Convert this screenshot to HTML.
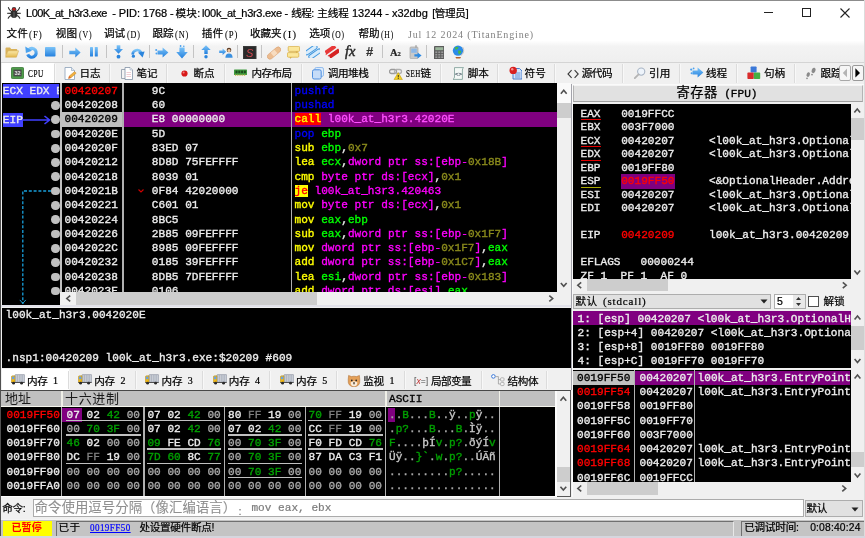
<!DOCTYPE html>
<html lang="zh"><head><meta charset="utf-8"><title>x32dbg</title>
<style>
*{box-sizing:border-box}
html,body{margin:0;padding:0}
body{width:865px;height:538px;overflow:hidden;will-change:transform;background:#f0f0f0;position:relative;font-family:"Liberation Sans","Noto Sans CJK SC",sans-serif;font-size:12px;color:#000}
.abs,.abs *{position:absolute}
div,span,svg{position:absolute}
.m{font-family:"Liberation Mono","DejaVu Sans Mono",monospace;font-weight:normal;-webkit-text-stroke-width:0.35px;font-size:11.12px;white-space:pre;line-height:14.29px;height:14.29px}
.m span,.t span,.inl span{position:static}
.t{white-space:pre;-webkit-text-stroke-width:0.22px}
.blk{background:#000}
.w{color:#ececec}.r{color:#f00}.g{color:#0f0}.b{color:#00f}.y{color:#ff0}.p{color:#f0f}.o{color:#8a8a1c}
.dg{color:#00a000}.gr{color:#a8a8a8}.gd{color:#808080}
.sep{background:#c8c8c8;width:1px}
.tab{top:0;height:21px;white-space:pre;font-size:12px;line-height:21px}
.vs{background:#f0f0f0}
.th{background:#cdcdcd}
</style></head><body>

<div style="left:0;top:0;width:865px;height:41px;background:#fff"></div>
<div style="left:0;top:0;width:865px;height:0.9px;background:#8c8c8c"></div>
<svg style="left:7px;top:5.8px" width="14" height="13" viewBox="0 0 14 13">
<g stroke="#2a2a2a" stroke-width="1.1" fill="none" stroke-linecap="round"><path d="M1.4 1.6 Q2 4 4.6 5.4 M12.6 1.6 Q12 4 9.4 5.4 M0.6 7.2 L4 7.4 M13.4 7.2 L10 7.4 M1.2 12.2 Q2 10 4.6 9.2 M12.8 12.2 Q12 10 9.4 9.2"/></g>
<ellipse cx="7" cy="8" rx="3.4" ry="4" fill="#2e2e2e"/><ellipse cx="7" cy="3.2" rx="2.3" ry="2.2" fill="#3a3a3a"/><ellipse cx="7" cy="3.2" rx="1.5" ry="1.3" fill="#c81818"/><path d="M7 6 V12" stroke="#888" stroke-width="0.6"/></svg>
<div class="t" style="left:26.1px;top:5px;font-size:11px;line-height:17px;color:#000;letter-spacing:-0.581px;">L00K_at_h3r3.exe</div>
<div class="t" style="left:112.3px;top:5px;font-size:11px;line-height:17px;color:#000;letter-spacing:-0.088px;">- PID: 1768 -</div>
<div class="t" style="left:175.4px;top:5px;font-size:10.6px;line-height:17px;color:#000;letter-spacing:0.280px;">模块:</div>
<div class="t" style="left:202.1px;top:5px;font-size:11px;line-height:17px;color:#000;letter-spacing:-0.296px;">l00k_at_h3r3.exe -</div>
<div class="t" style="left:291.2px;top:5px;font-size:10.6px;line-height:17px;color:#000;letter-spacing:-0.570px;">线程:</div>
<div class="t" style="left:317.2px;top:5px;font-size:10.6px;line-height:17px;color:#000;letter-spacing:-0.091px;">主线程</div>
<div class="t" style="left:352px;top:5px;font-size:11px;line-height:17px;color:#000;letter-spacing:-0.050px;">13244 - x32dbg</div>
<div class="t" style="left:432.2px;top:5px;font-size:10.6px;line-height:17px;color:#000;letter-spacing:-0.318px;">[管理员]</div>
<div style="left:764px;top:12px;width:9px;height:1px;background:#222"></div>
<div style="left:802px;top:8px;width:9px;height:9px;border:1px solid #222"></div>
<svg style="left:840px;top:8px" width="10" height="10" viewBox="0 0 10 10"><path d="M0.5 0.5 L9.5 9.5 M9.5 0.5 L0.5 9.5" stroke="#222" stroke-width="1.1"/></svg>
<div class="t" style="left:6.6000000000000005px;top:25px;font-size:10.6px;line-height:17px;letter-spacing:0.012px;">文件</div>
<div class="t" style="left:29.3px;top:25.5px;font-family:'Liberation Serif','Noto Sans CJK SC',serif;font-size:9.6px;line-height:17px;-webkit-text-stroke-width:0.1px;letter-spacing:1px;transform:scaleX(0.9247);transform-origin:0 0;">(F)</div>
<div class="t" style="left:55.8px;top:25px;font-size:10.6px;line-height:17px;letter-spacing:0.013px;">视图</div>
<div class="t" style="left:78.5px;top:25.5px;font-family:'Liberation Serif','Noto Sans CJK SC',serif;font-size:9.6px;line-height:17px;-webkit-text-stroke-width:0.1px;letter-spacing:1px;transform:scaleX(0.8155);transform-origin:0 0;">(V)</div>
<div class="t" style="left:104.0px;top:25px;font-size:10.6px;line-height:17px;letter-spacing:0.012px;">调试</div>
<div class="t" style="left:126.69999999999999px;top:25.5px;font-family:'Liberation Serif','Noto Sans CJK SC',serif;font-size:9.6px;line-height:17px;-webkit-text-stroke-width:0.1px;letter-spacing:1px;transform:scaleX(0.8416);transform-origin:0 0;">(D)</div>
<div class="t" style="left:152.4px;top:25px;font-size:10.6px;line-height:17px;letter-spacing:0.012px;">跟踪</div>
<div class="t" style="left:175.1px;top:25.5px;font-family:'Liberation Serif','Noto Sans CJK SC',serif;font-size:9.6px;line-height:17px;-webkit-text-stroke-width:0.1px;letter-spacing:1px;transform:scaleX(0.8677);transform-origin:0 0;">(N)</div>
<div class="t" style="left:201.8px;top:25px;font-size:10.6px;line-height:17px;letter-spacing:0.012px;">插件</div>
<div class="t" style="left:224.5px;top:25.5px;font-family:'Liberation Serif','Noto Sans CJK SC',serif;font-size:9.6px;line-height:17px;-webkit-text-stroke-width:0.1px;letter-spacing:1px;transform:scaleX(0.9101);transform-origin:0 0;">(P)</div>
<div class="t" style="left:250.0px;top:25px;font-size:10.6px;line-height:17px;letter-spacing:-0.141px;">收藏夹</div>
<div class="t" style="left:283.0px;top:25.5px;font-family:'Liberation Serif','Noto Sans CJK SC',serif;font-size:9.6px;line-height:17px;-webkit-text-stroke-width:0.1px;letter-spacing:1px;transform:scaleX(1.1213);transform-origin:0 0;">(I)</div>
<div class="t" style="left:309.2px;top:25px;font-size:10.6px;line-height:17px;letter-spacing:0.013px;">选项</div>
<div class="t" style="left:331.90000000000003px;top:25.5px;font-family:'Liberation Serif','Noto Sans CJK SC',serif;font-size:9.6px;line-height:17px;-webkit-text-stroke-width:0.1px;letter-spacing:1px;transform:scaleX(0.7894);transform-origin:0 0;">(O)</div>
<div class="t" style="left:358.4px;top:25px;font-size:10.6px;line-height:17px;letter-spacing:0.013px;">帮助</div>
<div class="t" style="left:381.1px;top:25.5px;font-family:'Liberation Serif','Noto Sans CJK SC',serif;font-size:9.6px;line-height:17px;-webkit-text-stroke-width:0.1px;letter-spacing:1px;transform:scaleX(0.7959);transform-origin:0 0;">(H)</div>
<div class="t" style="left:407.9px;top:25.5px;font-family:'Liberation Serif','Noto Sans CJK SC',serif;font-size:9.6px;line-height:17px;color:#808080;-webkit-text-stroke-width:0;letter-spacing:0.8px;transform:scaleX(1.0438);transform-origin:0 0;">Jul 12 2024 (TitanEngine)</div>
<div style="left:0;top:41px;width:865px;height:21px;background:linear-gradient(#fefefe 0,#f3f3f3 25%,#efefef 100%)"></div>
<div style="left:0;top:62px;width:865px;height:1px;background:#d4d4d4"></div>
<svg width="0" height="0" style="left:0;top:0"><defs><linearGradient id="gb" x1="0" y1="0" x2="0" y2="1"><stop offset="0" stop-color="#7cc4f8"/><stop offset="1" stop-color="#2480de"/></linearGradient><linearGradient id="gy" x1="0" y1="0" x2="0" y2="1"><stop offset="0" stop-color="#fbe9a8"/><stop offset="1" stop-color="#e3b84e"/></linearGradient></defs></svg>
<div style="left:61.9px;top:45px;width:1px;height:13px;background:#c4c4c4"></div>
<div style="left:105.5px;top:45px;width:1px;height:13px;background:#c4c4c4"></div>
<div style="left:149.0px;top:45px;width:1px;height:13px;background:#c4c4c4"></div>
<div style="left:192.7px;top:45px;width:1px;height:13px;background:#c4c4c4"></div>
<div style="left:237.1px;top:45px;width:1px;height:13px;background:#c4c4c4"></div>
<div style="left:260.9px;top:45px;width:1px;height:13px;background:#c4c4c4"></div>
<div style="left:381.9px;top:45px;width:1px;height:13px;background:#c4c4c4"></div>
<div style="left:425.5px;top:45px;width:1px;height:13px;background:#c4c4c4"></div>
<svg style="left:5px;top:46px" width="14" height="12" viewBox="0 0 14 12"><path d="M0.5 2.5 Q0.5 1.5 1.5 1.5 H5 L6.2 3 H11.5 Q12.3 3 12.3 4 V5 H3.2 L0.5 10.5 Z" fill="#d9b25a"/><path d="M3 4.8 H13.6 L11.4 11.2 H0.6 Z" fill="url(#gy)" stroke="#d0a444" stroke-width="0.5"/></svg>
<svg style="left:24.5px;top:45.5px" width="14" height="14" viewBox="0 0 14 14"><path d="M3.6 3.8 A4.4 4.4 0 1 1 2.7 8.4" fill="none" stroke="url(#gb)" stroke-width="3.2"/><path d="M0.3 0.6 L0.9 7 L7 4.8 Z" fill="#4aa2ee"/></svg>
<svg style="left:45px;top:47px" width="10.5" height="9.5" viewBox="0 0 10.5 9.5"><rect x="0" y="0" width="10.5" height="9.5" rx="0.8" fill="url(#gb)"/></svg>
<svg style="left:69px;top:46.5px" width="12" height="11" viewBox="0 0 12 11"><path d="M0.3 3.7 H6.3 V0.6 L11.6 5.5 L6.3 10.4 V7.3 H0.3 Z" fill="url(#gb)"/></svg>
<svg style="left:89.8px;top:47px" width="8" height="10" viewBox="0 0 8 10"><rect x="0" y="0" width="3" height="9.5" rx="0.6" fill="url(#gb)"/><rect x="4.8" y="0" width="3" height="9.5" rx="0.6" fill="url(#gb)"/></svg>
<svg style="left:113.5px;top:45px" width="9" height="14" viewBox="0 0 9 14"><path d="M2.7 0.3 H6.3 V4 H9 L4.5 8.8 L0 4 H2.7 Z" fill="url(#gb)"/><circle cx="4.5" cy="11.7" r="1.9" fill="#2a84dc"/></svg>
<svg style="left:131px;top:46.5px" width="14" height="11" viewBox="0 0 14 11"><path d="M1.6 7.5 A4.6 4.6 0 0 1 10.2 5.4" fill="none" stroke="url(#gb)" stroke-width="2.6"/><path d="M7 5.6 L13.6 4.6 L11.6 10.6 Z" fill="#2a84dc"/><circle cx="2.4" cy="9.2" r="1.6" fill="#2a84dc"/></svg>
<svg style="left:155px;top:46.5px" width="14" height="11" viewBox="0 0 14 11"><path d="M2.5 3.4 H7.6 V0.4 L13.4 5.5 L7.6 10.6 V7.6 H2.5 Z" fill="url(#gb)"/><circle cx="1.2" cy="3" r="1" fill="#4aa0ee"/><circle cx="1.4" cy="6.5" r="0.9" fill="#4aa0ee"/></svg>
<svg style="left:175.5px;top:45px" width="12" height="14" viewBox="0 0 12 14"><path d="M3.4 2.4 H8.6 V7 H11.8 L6 13.4 L0.2 7 H3.4 Z" fill="url(#gb)"/><circle cx="4.6" cy="1" r="0.9" fill="#4aa0ee"/><circle cx="7.8" cy="1.2" r="0.8" fill="#4aa0ee"/></svg>
<svg style="left:200.5px;top:45px" width="10" height="14" viewBox="0 0 10 14"><path d="M3.3 9 H6.7 V5 H9.7 L5 0.3 L0.3 5 H3.3 Z" fill="url(#gb)"/><circle cx="5" cy="11.8" r="1.7" fill="#2a84dc"/></svg>
<svg style="left:219px;top:46.5px" width="14" height="11" viewBox="0 0 14 11"><path d="M0.2 3.6 H3.6 V1.6 L7.2 4.8 L3.6 8 V6 H0.2 Z" fill="url(#gb)"/><circle cx="10" cy="3" r="2.3" fill="#5a3a24"/><circle cx="10" cy="3.6" r="1.5" fill="#f0c8a0"/><path d="M6.4 10.8 Q6.4 6.4 10 6.4 Q13.6 6.4 13.6 10.8 Z" fill="#3a90e0"/></svg>
<svg style="left:243px;top:45.5px" width="13.5" height="13.5" viewBox="0 0 13.5 13.5"><rect x="0" y="0" width="13.5" height="13.5" fill="#3a3a3a"/><rect x="1" y="1" width="11.5" height="11.5" fill="#2a2a2a"/><text x="6.75" y="11" font-family="Liberation Sans,sans-serif" font-style="italic" font-size="11" text-anchor="middle" fill="#d04850">S</text></svg>
<svg style="left:267px;top:45.5px" width="14" height="14" viewBox="0 0 14 14"><g transform="rotate(-40 7 7)"><rect x="-1" y="4.4" width="16" height="5.4" rx="2.7" fill="#ecbc90" stroke="#d49a68" stroke-width="0.5"/><rect x="4.6" y="4.7" width="4.8" height="4.8" fill="#f7dcc0"/></g></svg>
<svg style="left:287px;top:46px" width="13" height="13" viewBox="0 0 13 13"><rect x="1.2" y="0.4" width="11.4" height="5" rx="1" fill="#fbe79a" stroke="#d6a93a" stroke-width="0.7"/><rect x="0.4" y="6.6" width="11.4" height="4.6" rx="1" fill="#fbe79a" stroke="#d6a93a" stroke-width="0.7"/><path d="M8.5 5.4 L10 7 L10.8 5.4 Z M2.5 11.2 L3.4 12.8 L4.8 11.2 Z" fill="#d6a93a"/></svg>
<svg style="left:306px;top:46px" width="14" height="12" viewBox="0 0 14 12"><g transform="rotate(-35 7 6)"><rect x="-0.5" y="1" width="14" height="4.2" rx="2.1" fill="#d8ecfb" stroke="#3f97e0" stroke-width="1"/><rect x="0.5" y="6.6" width="14" height="4.2" rx="2.1" fill="#d8ecfb" stroke="#3f97e0" stroke-width="1"/></g></svg>
<svg style="left:325px;top:46px" width="14" height="12" viewBox="0 0 14 12"><g transform="rotate(-35 7 6)"><path d="M0 1 H13 V5 H0 L1.6 3 Z" fill="#e83838"/><path d="M1 6.6 H14 V10.6 H1 L2.6 8.6 Z" fill="#d62222"/></g></svg>
<div class="t" style="left:345px;top:42.5px;font-family:'Liberation Serif','Noto Sans CJK SC',serif;font-style:italic;font-size:14.5px;line-height:17px;color:#2a2a2a;-webkit-text-stroke-width:0.45px">fx</div>
<div class="t" style="left:366px;top:44px;font-family:'Liberation Sans','Noto Sans CJK SC',sans-serif;font-style:italic;font-weight:bold;font-size:12.5px;line-height:16px;color:#333">#</div>
<div class="t" style="left:390px;top:45px;font-family:'Liberation Serif','Noto Sans CJK SC',serif;font-weight:bold;font-size:10.5px;line-height:16px;color:#222">A<span style="font-size:6.5px">2</span></div>
<svg style="left:409px;top:45px" width="13" height="14" viewBox="0 0 13 14"><rect x="1" y="2" width="8" height="11.6" rx="1" fill="#c9c9c9" stroke="#9a9a9a" stroke-width="0.6"/><rect x="2.2" y="3.6" width="5.6" height="4.2" fill="#8db7e6"/><rect x="6.4" y="0.2" width="1.2" height="2.4" fill="#9a9a9a"/><path d="M5.4 9.2 H8.6 V7.4 L12.6 10.4 L8.6 13.4 V11.6 H5.4 Z" fill="#2e8ae2"/></svg>
<svg style="left:433.5px;top:45.5px" width="10.5" height="13.5" viewBox="0 0 10.5 13.5"><rect x="0" y="0" width="10.5" height="13.5" rx="0.8" fill="#5c5c5c"/><rect x="1.3" y="1.2" width="7.9" height="3" fill="#9bb59b"/><g fill="#9a9a9a"><rect x="1.3" y="5.4" width="2" height="1.6"/><rect x="4.25" y="5.4" width="2" height="1.6"/><rect x="7.2" y="5.4" width="2" height="1.6"/><rect x="1.3" y="7.9" width="2" height="1.6"/><rect x="4.25" y="7.9" width="2" height="1.6"/><rect x="7.2" y="7.9" width="2" height="1.6"/><rect x="1.3" y="10.4" width="2" height="1.6"/><rect x="4.25" y="10.4" width="2" height="1.6"/><rect x="7.2" y="10.4" width="2" height="1.6"/></g></svg>
<svg style="left:451.5px;top:45px" width="13" height="14" viewBox="0 0 13 14"><circle cx="6" cy="5.6" r="5.2" fill="#2b8ae8"/><path d="M3 2.4 Q5 1 6.6 2.6 Q6 4.6 4 4.8 Q2.4 4.4 3 2.4 Z M6.2 5.6 Q8.6 5 9.4 6.8 Q8.6 9.2 7 9.4 Q5.6 7.6 6.2 5.6 Z" fill="#46b848"/><path d="M10.6 2 A6 6 0 0 1 8.8 10.6" fill="none" stroke="#b8b8b8" stroke-width="0.9"/><path d="M3.4 12 H9 L8.2 13.6 H4.2 Z" fill="#b4602c"/></svg>
<div style="left:0;top:63px;width:865px;height:21px;background:#f0f0f0"></div>
<div style="left:2px;top:63px;width:52px;height:20.5px;background:#fff"></div>
<div style="left:53.7px;top:64px;width:1px;height:18.5px;background:#dcdcdc"></div>
<div style="left:54.7px;top:64px;width:1px;height:18.5px;background:#f8f8f8"></div>
<div style="left:108.9px;top:64px;width:1px;height:18.5px;background:#dcdcdc"></div>
<div style="left:109.9px;top:64px;width:1px;height:18.5px;background:#f8f8f8"></div>
<div style="left:166.2px;top:64px;width:1px;height:18.5px;background:#dcdcdc"></div>
<div style="left:167.2px;top:64px;width:1px;height:18.5px;background:#f8f8f8"></div>
<div style="left:223.5px;top:64px;width:1px;height:18.5px;background:#dcdcdc"></div>
<div style="left:224.5px;top:64px;width:1px;height:18.5px;background:#f8f8f8"></div>
<div style="left:300.5px;top:64px;width:1px;height:18.5px;background:#dcdcdc"></div>
<div style="left:301.5px;top:64px;width:1px;height:18.5px;background:#f8f8f8"></div>
<div style="left:377.9px;top:64px;width:1px;height:18.5px;background:#dcdcdc"></div>
<div style="left:378.9px;top:64px;width:1px;height:18.5px;background:#f8f8f8"></div>
<div style="left:440.4px;top:64px;width:1px;height:18.5px;background:#dcdcdc"></div>
<div style="left:441.4px;top:64px;width:1px;height:18.5px;background:#f8f8f8"></div>
<div style="left:497.1px;top:64px;width:1px;height:18.5px;background:#dcdcdc"></div>
<div style="left:498.1px;top:64px;width:1px;height:18.5px;background:#f8f8f8"></div>
<div style="left:554.4px;top:64px;width:1px;height:18.5px;background:#dcdcdc"></div>
<div style="left:555.4px;top:64px;width:1px;height:18.5px;background:#f8f8f8"></div>
<div style="left:621.8px;top:64px;width:1px;height:18.5px;background:#dcdcdc"></div>
<div style="left:622.8px;top:64px;width:1px;height:18.5px;background:#f8f8f8"></div>
<div style="left:679.0px;top:64px;width:1px;height:18.5px;background:#dcdcdc"></div>
<div style="left:680.0px;top:64px;width:1px;height:18.5px;background:#f8f8f8"></div>
<div style="left:735.5px;top:64px;width:1px;height:18.5px;background:#dcdcdc"></div>
<div style="left:736.5px;top:64px;width:1px;height:18.5px;background:#f8f8f8"></div>
<div style="left:794.3px;top:64px;width:1px;height:18.5px;background:#dcdcdc"></div>
<div style="left:795.3px;top:64px;width:1px;height:18.5px;background:#f8f8f8"></div>
<svg style="left:10.7px;top:66.8px" width="13" height="12" viewBox="0 0 13 12"><rect x="0.4" y="0.4" width="12.2" height="11.2" rx="1.2" fill="#4e9e4a" stroke="#2f6e2c" stroke-width="0.8"/><rect x="2.4" y="2.6" width="8.2" height="6.8" fill="#4a4a4a"/><text x="6.5" y="8.3" font-size="5.6" font-family="Liberation Sans,sans-serif" font-weight="bold" text-anchor="middle" fill="#e8e8e8">32</text></svg>
<div class="t" style="left:27.5px;top:63px;height:20.5px;line-height:21.5px;font-size:10.5px;font-family:'Liberation Serif','Noto Sans CJK SC',serif;letter-spacing:0.8px;transform:scaleX(0.6900);transform-origin:0 0;">CPU</div>
<svg style="left:64px;top:66.5px" width="12.5" height="13" viewBox="0 0 12.5 13"><path d="M1 0.5 H7.5 L10.5 3.5 V12.5 H1 Z" fill="#fff" stroke="#8aa0b8" stroke-width="0.8"/><path d="M7.5 0.5 V3.5 H10.5" fill="#dfe8f2" stroke="#8aa0b8" stroke-width="0.6"/><path d="M4.5 11.5 L5.2 9 L10.6 4.6 L12.2 6.2 L7 10.8 Z" fill="#f0b040" stroke="#b87818" stroke-width="0.4"/><path d="M4.5 11.5 L5.2 9 L7 10.8 Z" fill="#e06030"/></svg>
<div class="t" style="left:79.4px;top:63px;height:20.5px;line-height:21.5px;font-size:10.6px;;letter-spacing:0.012px;">日志</div>
<svg style="left:121px;top:66.5px" width="12" height="13" viewBox="0 0 12 13"><path d="M0.5 2.5 H6 V11.5 H0.5 Z" fill="#f4f4f4" stroke="#8894a4" stroke-width="0.8"/><path d="M4 0.5 H9 L11.5 3 V12.5 H4 Z" fill="#fff" stroke="#8090a4" stroke-width="0.8"/><path d="M9 0.5 V3 H11.5" fill="#e4eaf2" stroke="#9aa6b6" stroke-width="0.5"/><path d="M5.5 5.5 H10 M5.5 7.5 H10 M5.5 9.5 H10" stroke="#e8b8c0" stroke-width="0.7"/></svg>
<div class="t" style="left:136.4px;top:63px;height:20.5px;line-height:21.5px;font-size:10.6px;;letter-spacing:0.012px;">笔记</div>
<svg style="left:180.5px;top:69.5px" width="7" height="7" viewBox="0 0 7 7"><circle cx="3.5" cy="3.5" r="3.1" fill="#d81818"/><circle cx="2.6" cy="2.5" r="1" fill="#f08080"/></svg>
<div class="t" style="left:193.4px;top:63px;height:20.5px;line-height:21.5px;font-size:10.6px;;letter-spacing:0.012px;">断点</div>
<svg style="left:234px;top:68.5px" width="13" height="7.5" viewBox="0 0 13 7.5"><rect x="0" y="0.5" width="13" height="5.6" rx="0.6" fill="#3f9a3f"/><g fill="#1c4a1c"><rect x="1.5" y="1.6" width="2" height="2.6"/><rect x="4.3" y="1.6" width="2" height="2.6"/><rect x="7.1" y="1.6" width="2" height="2.6"/><rect x="9.9" y="1.6" width="2" height="2.6"/></g><path d="M1 6.2 H12" stroke="#c8b040" stroke-width="1.2" stroke-dasharray="1 0.8"/></svg>
<div class="t" style="left:251.4px;top:63px;height:20.5px;line-height:21.5px;font-size:10.6px;;letter-spacing:-0.592px;">内存布局</div>
<svg style="left:311.5px;top:67px" width="12" height="12.5" viewBox="0 0 12 12.5"><rect x="2.8" y="0.5" width="8.7" height="9" rx="1.6" fill="#dcebfb" stroke="#7fb0ea" stroke-width="0.8"/><rect x="0.5" y="2.8" width="8.7" height="9.2" rx="1.6" fill="#c6dcf8" stroke="#4e8ede" stroke-width="1"/></svg>
<div class="t" style="left:327.7px;top:63px;height:20.5px;line-height:21.5px;font-size:10.6px;;letter-spacing:-0.392px;">调用堆栈</div>
<svg style="left:389.4px;top:67.5px" width="14" height="12" viewBox="0 0 14 12"><rect x="0.5" y="1.5" width="7" height="4" rx="2" fill="none" stroke="#9a9a9a" stroke-width="1.3"/><rect x="5.5" y="1.5" width="7" height="4" rx="2" fill="none" stroke="#b0b0b0" stroke-width="1.3"/><path d="M9.2 4.6 L13.4 11.6 H5 Z" fill="#f4d020" stroke="#b89400" stroke-width="0.5"/><rect x="8.8" y="7" width="0.9" height="2.4" fill="#222"/><rect x="8.8" y="10" width="0.9" height="0.9" fill="#222"/></svg>
<div class="t" style="left:406px;top:63px;height:20.5px;line-height:21.5px;font-size:10.5px;font-family:'Liberation Serif','Noto Sans CJK SC',serif;letter-spacing:0.8px;transform:scaleX(0.6667);transform-origin:0 0;">SEH</div>
<div class="t" style="left:420.4px;top:63px;height:20.5px;line-height:21.5px;font-size:10.6px;;letter-spacing:0.000px;">链</div>
<svg style="left:451.5px;top:66.5px" width="12.5" height="13" viewBox="0 0 12.5 13"><path d="M2.5 0.6 H11.6 Q10.4 1.6 10.4 3 V12.4 H1 Q2.5 11.4 2.5 10 Z" fill="#f4f8f6" stroke="#7a9a94" stroke-width="0.8"/><text x="6.4" y="8.8" font-size="6" font-weight="bold" font-family="Liberation Sans,sans-serif" text-anchor="middle" fill="#3a4a5a">&lt;&gt;</text></svg>
<div class="t" style="left:467.7px;top:63px;height:20.5px;line-height:21.5px;font-size:10.6px;;letter-spacing:0.013px;">脚本</div>
<svg style="left:508.5px;top:66px" width="13.5" height="13.5" viewBox="0 0 13.5 13.5"><path d="M4 2.5 H10.5 L13 5 V13 H4 Z" fill="#d4e4fa" stroke="#3a6fc4" stroke-width="0.9"/><path d="M6 7 H11.5 M6 9 H11.5 M6 11 H11.5" stroke="#4a80d0" stroke-width="0.8"/><circle cx="4.2" cy="4.4" r="3.7" fill="#d82020"/><circle cx="3.2" cy="3.2" r="1.2" fill="#f49090"/></svg>
<div class="t" style="left:524.6px;top:63px;height:20.5px;line-height:21.5px;font-size:10.6px;;letter-spacing:0.013px;">符号</div>
<svg style="left:566.5px;top:68.5px" width="13" height="10" viewBox="0 0 13 10"><path d="M4.6 1.2 L1 5 L4.6 8.8 M7.6 1.2 L11.2 5 L7.6 8.8" stroke="#3a3a3a" stroke-width="1.1" fill="none"/></svg>
<div class="t" style="left:581.6999999999999px;top:63px;height:20.5px;line-height:21.5px;font-size:10.6px;;letter-spacing:-0.441px;">源代码</div>
<svg style="left:634px;top:67px" width="12" height="12" viewBox="0 0 12 12"><circle cx="7.2" cy="4.6" r="3.6" fill="#eef4fb" stroke="#a8b4c4" stroke-width="1.1"/><path d="M4.6 7.4 L0.8 11.2" stroke="#b4b4b4" stroke-width="1.8" stroke-linecap="round"/></svg>
<div class="t" style="left:649.1px;top:63px;height:20.5px;line-height:21.5px;font-size:10.6px;;letter-spacing:0.013px;">引用</div>
<svg style="left:690px;top:67px" width="14" height="11" viewBox="0 0 14 11"><path d="M2.5 3.4 H7.6 V0.4 L13.4 5.5 L7.6 10.6 V7.6 H2.5 Z" fill="url(#gb)"/><circle cx="1.2" cy="2.6" r="1.1" fill="#4aa0ee"/><circle cx="1.6" cy="6.2" r="1" fill="#4aa0ee"/><circle cx="3.6" cy="1.4" r="0.9" fill="#4aa0ee"/></svg>
<div class="t" style="left:706.0px;top:63px;height:20.5px;line-height:21.5px;font-size:10.6px;;letter-spacing:0.013px;">线程</div>
<svg style="left:747px;top:66px" width="13.5" height="13.5" viewBox="0 0 13.5 13.5"><rect x="3.6" y="0.4" width="6" height="6.2" rx="0.8" fill="#3a78d8"/><rect x="0.4" y="6.6" width="6.4" height="6.4" rx="0.8" fill="#d82c2c"/><rect x="6.8" y="6.6" width="6.4" height="6.4" rx="0.8" fill="#44b044"/></svg>
<div class="t" style="left:763.9px;top:63px;height:20.5px;line-height:21.5px;font-size:10.6px;;letter-spacing:0.013px;">句柄</div>
<svg style="left:805px;top:66.5px" width="12" height="13" viewBox="0 0 12 13"><ellipse cx="8.6" cy="3.4" rx="1.9" ry="2.8" fill="#8a8a8a" transform="rotate(20 8.6 3.4)"/><ellipse cx="3.2" cy="7.6" rx="1.6" ry="2.4" fill="#8a8a8a" transform="rotate(20 3.2 7.6)"/><circle cx="7" cy="7.6" r="0.9" fill="#8a8a8a"/><circle cx="2" cy="11.4" r="0.8" fill="#8a8a8a"/></svg>
<div class="t" style="left:820.6px;top:63px;width:19.5px;overflow:hidden;height:20.5px;line-height:21.5px;font-size:10.6px;letter-spacing:-0.3px">跟踪</div>
<div style="left:839px;top:65px;width:12px;height:15.8px;background:#f6f6f6;border:1px solid #a8a8a8;border-radius:2px"></div>
<div style="left:851.6px;top:65px;width:12px;height:15.8px;background:#f6f6f6;border:1px solid #9a9a9a;border-radius:2px"></div>
<svg style="left:839px;top:65px" width="25" height="16" viewBox="0 0 25 16"><path d="M8 3.6 L3.8 7.9 L8 12.2 Z" fill="#b4b4b4"/><path d="M16.4 3.2 L21 7.9 L16.4 12.6 Z" fill="#000"/></svg>
<div style="left:570.5px;top:83.5px;width:295px;height:1px;background:#fafafa"></div>
<div class="blk" style="left:2px;top:83.3px;width:57.5px;height:221.9px"></div>
<div style="left:59.5px;top:83.3px;width:2px;height:208.5px;background:#c0c0c0"></div>
<div class="blk" style="left:61.5px;top:83.3px;width:495.5px;height:208.5px"></div>
<div style="left:61.5px;top:112.48px;width:60.5px;height:14.29px;background:#c0c0c0"></div>
<div style="left:123.5px;top:112.48px;width:433.5px;height:14.29px;background:#800080"></div>
<div style="left:122px;top:83.3px;width:1.5px;height:208.5px;background:#b0b0b0"></div>
<div style="left:290.5px;top:83.3px;width:1.5px;height:208.5px;background:#b0b0b0"></div>
<div class="m w" style="left:2.8px;top:83.70px;width:56.7px;background:#4040ff;overflow:hidden">ECX EDX E</div>
<div class="m w" style="left:2.8px;top:112.78px;width:20.6px;background:#4040ff;overflow:hidden">EIP</div>
<svg style="left:23px;top:114.62px" width="28" height="10" viewBox="0 0 28 10"><path d="M0 5 H26 M21.5 1 L26.5 5 L21.5 9" stroke="#4040ff" stroke-width="1.6" fill="none"/></svg>
<div style="left:51px;top:101.03px;width:8.6px;height:8.6px;border-radius:50%;background:#c0c0c0"></div>
<div style="left:51px;top:115.33px;width:8.6px;height:8.6px;border-radius:50%;background:#c0c0c0"></div>
<div style="left:51px;top:129.62px;width:8.6px;height:8.6px;border-radius:50%;background:#c0c0c0"></div>
<div style="left:51px;top:143.91px;width:8.6px;height:8.6px;border-radius:50%;background:#c0c0c0"></div>
<div style="left:51px;top:158.19px;width:8.6px;height:8.6px;border-radius:50%;background:#c0c0c0"></div>
<div style="left:51px;top:172.48px;width:8.6px;height:8.6px;border-radius:50%;background:#c0c0c0"></div>
<div style="left:51px;top:186.78px;width:8.6px;height:8.6px;border-radius:50%;background:#c0c0c0"></div>
<div style="left:51px;top:201.06px;width:8.6px;height:8.6px;border-radius:50%;background:#c0c0c0"></div>
<div style="left:51px;top:215.35px;width:8.6px;height:8.6px;border-radius:50%;background:#c0c0c0"></div>
<div style="left:51px;top:229.64px;width:8.6px;height:8.6px;border-radius:50%;background:#c0c0c0"></div>
<div style="left:51px;top:243.94px;width:8.6px;height:8.6px;border-radius:50%;background:#c0c0c0"></div>
<div style="left:51px;top:258.22px;width:8.6px;height:8.6px;border-radius:50%;background:#c0c0c0"></div>
<div style="left:51px;top:272.51px;width:8.6px;height:8.6px;border-radius:50%;background:#c0c0c0"></div>
<div style="left:51px;top:286.81px;width:8.6px;height:8.6px;border-radius:50%;background:#c0c0c0"></div>
<svg style="left:18px;top:189.08px" width="36" height="120" viewBox="0 0 36 120"><path d="M33 2 H4.8 V114.9" stroke="#18a0dc" stroke-width="1.3" stroke-dasharray="3 1.8" fill="none"/><path d="M1.8 110.9 L4.8 114.4 L7.8 110.9" stroke="#1c9cd0" stroke-width="1" fill="none"/></svg>
<div style="left:61.5px;top:84px;width:495.5px;height:208px;overflow:hidden">
<div class="m r" style="left:3px;top:-0.10px">00420207</div>
<div class="m w" style="left:90.3px;top:-0.10px">9C</div>
<div class="m" style="left:233px;top:-0.10px"><span class="b">pushfd</span></div>
<div class="m w" style="left:3px;top:14.19px">00420208</div>
<div class="m w" style="left:90.3px;top:14.19px">60</div>
<div class="m" style="left:233px;top:14.19px"><span class="b">pushad</span></div>
<div class="m " style="color:#000;left:3px;top:28.48px">00420209</div>
<div class="m w" style="left:90.3px;top:28.48px">E8 00000000</div>
<div class="m" style="left:233px;top:28.48px"><span class="y" style="background:#f00">call</span> <span style="color:#ff50ff">l00k_at_h3r3.42020E</span></div>
<div class="m w" style="left:3px;top:42.77px">0042020E</div>
<div class="m w" style="left:90.3px;top:42.77px">5D</div>
<div class="m" style="left:233px;top:42.77px"><span class="b">pop</span> <span class="g">ebp</span></div>
<div class="m w" style="left:3px;top:57.06px">0042020F</div>
<div class="m w" style="left:90.3px;top:57.06px">83ED 07</div>
<div class="m" style="left:233px;top:57.06px"><span class="y">sub</span> <span class="g">ebp</span><span class="w">,</span><span class="o">0x7</span></div>
<div class="m w" style="left:3px;top:71.35px">00420212</div>
<div class="m w" style="left:90.3px;top:71.35px">8D8D 75FEFFFF</div>
<div class="m" style="left:233px;top:71.35px"><span class="y">lea</span> <span class="g">ecx</span><span class="w">,</span><span class="p">dword ptr ss:[ebp-<span class="o">0x18B</span>]</span></div>
<div class="m w" style="left:3px;top:85.64px">00420218</div>
<div class="m w" style="left:90.3px;top:85.64px">8039 01</div>
<div class="m" style="left:233px;top:85.64px"><span class="y">cmp</span> <span class="p">byte ptr ds:[ecx]</span><span class="w">,</span><span class="o">0x1</span></div>
<div class="m w" style="left:3px;top:99.93px">0042021B</div>
<div class="m w" style="left:90.3px;top:99.93px">0F84 42020000</div>
<div class="m" style="left:233px;top:99.93px"><span class="r" style="background:#ff0">je</span> <span class="p">l00k_at_h3r3.420463</span></div>
<div class="m w" style="left:3px;top:114.22px">00420221</div>
<div class="m w" style="left:90.3px;top:114.22px">C601 01</div>
<div class="m" style="left:233px;top:114.22px"><span class="y">mov</span> <span class="p">byte ptr ds:[ecx]</span><span class="w">,</span><span class="o">0x1</span></div>
<div class="m w" style="left:3px;top:128.51px">00420224</div>
<div class="m w" style="left:90.3px;top:128.51px">8BC5</div>
<div class="m" style="left:233px;top:128.51px"><span class="y">mov</span> <span class="g">eax</span><span class="w">,</span><span class="g">ebp</span></div>
<div class="m w" style="left:3px;top:142.80px">00420226</div>
<div class="m w" style="left:90.3px;top:142.80px">2B85 09FEFFFF</div>
<div class="m" style="left:233px;top:142.80px"><span class="y">sub</span> <span class="g">eax</span><span class="w">,</span><span class="p">dword ptr ss:[ebp-<span class="o">0x1F7</span>]</span></div>
<div class="m w" style="left:3px;top:157.09px">0042022C</div>
<div class="m w" style="left:90.3px;top:157.09px">8985 09FEFFFF</div>
<div class="m" style="left:233px;top:157.09px"><span class="y">mov</span> <span class="p">dword ptr ss:[ebp-<span class="o">0x1F7</span>]</span><span class="w">,</span><span class="g">eax</span></div>
<div class="m w" style="left:3px;top:171.38px">00420232</div>
<div class="m w" style="left:90.3px;top:171.38px">0185 39FEFFFF</div>
<div class="m" style="left:233px;top:171.38px"><span class="y">add</span> <span class="p">dword ptr ss:[ebp-<span class="o">0x1C7</span>]</span><span class="w">,</span><span class="g">eax</span></div>
<div class="m w" style="left:3px;top:185.67px">00420238</div>
<div class="m w" style="left:90.3px;top:185.67px">8DB5 7DFEFFFF</div>
<div class="m" style="left:233px;top:185.67px"><span class="y">lea</span> <span class="g">esi</span><span class="w">,</span><span class="p">dword ptr ss:[ebp-<span class="o">0x183</span>]</span></div>
<div class="m w" style="left:3px;top:199.96px">0042023E</div>
<div class="m w" style="left:90.3px;top:199.96px">0106</div>
<div class="m" style="left:233px;top:199.96px"><span class="y">add</span> <span class="p">dword ptr ds:[esi]</span><span class="w">,</span><span class="g">eax</span></div>
<svg style="left:76px;top:104.93px" width="6" height="4" viewBox="0 0 6 4"><path d="M0.5 0.5 L3 3 L5.5 0.5" stroke="#d00000" stroke-width="1.1" fill="none"/></svg>
</div>
<div class="vs" style="left:557px;top:83.3px;width:13.5px;height:208.3px"></div>
<div class="th" style="left:557px;top:103.4px;width:13.5px;height:14.599999999999994px"></div>
<svg style="left:557px;top:83.3px" width="13.5" height="208.3" viewBox="0 0 13.5 208.3"><path d="M3.85 10.7 L6.75 7.3 L9.65 10.7" stroke="#505050" stroke-width="1.6" fill="none"/><path d="M3.85 199.90000000000003 L6.75 203.3 L9.65 199.90000000000003" stroke="#505050" stroke-width="1.6" fill="none"/></svg>
<div style="left:557px;top:83.3px;width:13.5px;height:20px;background:#fafafa"></div>
<svg style="left:557px;top:83.3px" width="13.5" height="20" viewBox="0 0 13.5 20"><path d="M3.85 10.7 L6.75 7.3 L9.65 10.7" stroke="#505050" stroke-width="1.6" fill="none"/></svg>
<div class="vs" style="left:61.5px;top:291.6px;width:495.5px;height:13px"></div>
<div class="th" style="left:76px;top:291.6px;width:241px;height:13px"></div>
<svg style="left:61.5px;top:291.6px" width="495.5" height="13" viewBox="0 0 495.5 13"><path d="M8.2 3.6 L4.8 6.5 L8.2 9.4" stroke="#505050" stroke-width="1.6" fill="none"/><path d="M487.3 3.6 L490.7 6.5 L487.3 9.4" stroke="#505050" stroke-width="1.6" fill="none"/></svg>
<div style="left:557px;top:292px;width:13.5px;height:12.5px;background:#f0f0f0"></div>
<div style="left:0;top:305.2px;width:570.5px;height:2.1px;background:#e2e2ea"></div>
<div style="left:570.6px;top:84px;width:1px;height:306px;background:#a4a4ac"></div>
<div style="left:571.6px;top:84px;width:1.4px;height:412.5px;background:#fafafa"></div>
<div style="left:573px;top:84.5px;width:290px;height:17.3px;background:#e1e1e1;border:1px solid #b4b4b4;border-top-color:#f4f4f4;border-bottom-color:#a0a0a0"></div>
<div class="t" style="left:676.6px;top:84.3px;line-height:17.5px;font-size:13.3px;letter-spacing:0.405px;">寄存器</div>
<div class="m" style="left:724.2px;top:86.6px;color:#000">(FPU)</div>
<div class="blk" style="left:573px;top:103.8px;width:278px;height:175px"></div>
<div style="left:573px;top:103.8px;width:278px;height:175px;overflow:hidden">
<div class="m w" style="left:7.5px;top:3.10px">EAX</div>
<div style="left:7.5px;top:15.30px;width:20px;height:1.4px;background:#e00000"></div>
<div class="m w" style="left:48.2px;top:3.10px">0019FFCC</div>
<div class="m w" style="left:7.5px;top:16.60px">EBX</div>
<div class="m w" style="left:48.2px;top:16.60px">003F7000</div>
<div class="m w" style="left:7.5px;top:30.10px">ECX</div>
<div style="left:7.5px;top:42.30px;width:20px;height:1.4px;background:#e00000"></div>
<div class="m w" style="left:48.2px;top:30.10px">00420207</div>
<div class="m w" style="left:136px;top:30.10px">&lt;l00k_at_h3r3.OptionalHeader</div>
<div class="m w" style="left:7.5px;top:43.60px">EDX</div>
<div style="left:7.5px;top:55.80px;width:20px;height:1.4px;background:#e00000"></div>
<div class="m w" style="left:48.2px;top:43.60px">00420207</div>
<div class="m w" style="left:136px;top:43.60px">&lt;l00k_at_h3r3.OptionalHeader</div>
<div class="m w" style="left:7.5px;top:57.10px">EBP</div>
<div class="m w" style="left:48.2px;top:57.10px">0019FF80</div>
<div class="m w" style="left:7.5px;top:70.60px">ESP</div>
<div style="left:7.5px;top:82.80px;width:20px;height:1.4px;background:#a8a800"></div>
<div class="m r" style="left:48.2px;top:70.60px;background:#800080">0019FF50</div>
<div class="m w" style="left:136px;top:70.60px">&lt;&amp;OptionalHeader.Address</div>
<div class="m w" style="left:7.5px;top:84.10px">ESI</div>
<div class="m w" style="left:48.2px;top:84.10px">00420207</div>
<div class="m w" style="left:136px;top:84.10px">&lt;l00k_at_h3r3.OptionalHeader</div>
<div class="m w" style="left:7.5px;top:97.60px">EDI</div>
<div class="m w" style="left:48.2px;top:97.60px">00420207</div>
<div class="m w" style="left:136px;top:97.60px">&lt;l00k_at_h3r3.OptionalHeader</div>
<div class="m w" style="left:7.5px;top:124.60px">EIP</div><div class="m r" style="left:48.2px;top:124.60px">00420209</div><div class="m w" style="left:136px;top:124.60px">l00k_at_h3r3.00420209</div>
<div class="m w" style="left:7.5px;top:151.60px">EFLAGS   00000244</div>
<div class="m w" style="left:7.5px;top:165.10px">ZF 1  PF 1  AF 0</div>
</div>
<div class="vs" style="left:851px;top:103.8px;width:12.5px;height:175px"></div>
<div class="th" style="left:851px;top:117.6px;width:12.5px;height:22.400000000000006px"></div>
<svg style="left:851px;top:103.8px" width="12.5" height="175" viewBox="0 0 12.5 175"><path d="M3.35 8.4 L6.25 5.0 L9.15 8.4" stroke="#505050" stroke-width="1.6" fill="none"/><path d="M3.35 166.60000000000002 L6.25 170.0 L9.15 166.60000000000002" stroke="#505050" stroke-width="1.6" fill="none"/></svg>
<div class="vs" style="left:573px;top:278.8px;width:278px;height:12.5px"></div>
<div class="th" style="left:587px;top:278.8px;width:81px;height:12.5px"></div>
<svg style="left:573px;top:278.8px" width="278" height="12.5" viewBox="0 0 278 12.5"><path d="M8.2 3.35 L4.8 6.25 L8.2 9.15" stroke="#505050" stroke-width="1.6" fill="none"/><path d="M269.8 3.35 L273.2 6.25 L269.8 9.15" stroke="#505050" stroke-width="1.6" fill="none"/></svg>
<div style="left:851px;top:278.8px;width:12.5px;height:12.5px;background:#f0f0f0"></div>
<div style="left:573px;top:293.5px;width:197.5px;height:15.5px;background:#e1e1e1;border:1px solid #adadad"></div>
<div class="t" style="left:575.4px;top:293.5px;line-height:15.5px;font-size:10.6px;letter-spacing:0.513px;">默认</div>
<div class="t" style="left:602.8px;top:293.8px;line-height:15.5px;font-size:10.5px;font-family:'Liberation Serif','Noto Sans CJK SC',serif;letter-spacing:0.8px;transform:scaleX(1.0463);transform-origin:0 0;">(stdcall)</div>
<svg style="left:759.8px;top:299px" width="8" height="5" viewBox="0 0 8 5"><path d="M0.5 0.5 H7.5 L4 4.5 Z" fill="#222"/></svg>
<div style="left:774px;top:294px;width:31.7px;height:14.6px;background:#fff;border:1px solid #adadad"></div>
<div class="t" style="left:777px;top:293.5px;line-height:15.5px;font-size:10.5px;font-family:'Liberation Sans','Noto Sans CJK SC',sans-serif">5</div>
<div style="left:793px;top:295px;width:11.5px;height:12.6px;background:#e8e8e8"></div>
<svg style="left:795.2px;top:296.2px" width="7" height="11" viewBox="0 0 7 11"><path d="M1 4 L3.5 1 L6 4 Z M1 7 L3.5 10 L6 7 Z" fill="#333"/></svg>
<div style="left:808.3px;top:296px;width:11.2px;height:10.8px;background:#fff;border:1px solid #505050"></div>
<div class="t" style="left:823.4px;top:293.5px;line-height:15.5px;font-size:10.6px;letter-spacing:0.013px;">解锁</div>
<div class="blk" style="left:573px;top:311px;width:277.5px;height:56.5px"></div>
<div style="left:573px;top:311px;width:277.5px;height:14.3px;background:#800080"></div>
<div style="left:573px;top:311px;width:277.5px;height:56.5px;overflow:hidden">
<div class="m w" style="left:4.5px;top:1.00px">1: [esp] 00420207 &lt;l00k_at_h3r3.OptionalHeader</div>
<div class="m w" style="left:4.5px;top:15.05px">2: [esp+4] 00420207 &lt;l00k_at_h3r3.OptionalHeader</div>
<div class="m w" style="left:4.5px;top:29.10px">3: [esp+8] 0019FF80 0019FF80</div>
<div class="m w" style="left:4.5px;top:43.15px">4: [esp+C] 0019FF70 0019FF70</div>
</div>
<div class="vs" style="left:850.5px;top:311px;width:13px;height:56.5px"></div>
<div class="th" style="left:850.5px;top:325.8px;width:13px;height:24.5px"></div>
<svg style="left:850.5px;top:311px" width="13" height="56.5" viewBox="0 0 13 56.5"><path d="M3.6 8.4 L6.5 5.0 L9.4 8.4" stroke="#505050" stroke-width="1.6" fill="none"/><path d="M3.6 48.099999999999994 L6.5 51.5 L9.4 48.099999999999994" stroke="#505050" stroke-width="1.6" fill="none"/></svg>
<div class="blk" style="left:573px;top:370px;width:277.5px;height:112px"></div>
<div style="left:573px;top:370.7px;width:61.2px;height:14.29px;background:#c0c0c0"></div>
<div style="left:635.2px;top:370.7px;width:215.3px;height:14.29px;background:#800080"></div>
<div style="left:634px;top:370px;width:1.2px;height:112px;background:#b0b0b0"></div>
<div style="left:694px;top:370px;width:1.2px;height:112px;background:#b0b0b0"></div>
<div style="left:573px;top:370px;width:277.5px;height:112px;overflow:hidden">
<div class="m w" style="color:#000;left:4px;top:0.70px">0019FF50</div>
<div class="m w" style="left:66.5px;top:0.70px">00420207</div>
<div class="m w" style="left:124.6px;top:0.70px">l00k_at_h3r3.EntryPoint</div>
<div class="m r" style="left:4px;top:14.99px">0019FF54</div>
<div class="m w" style="left:66.5px;top:14.99px">00420207</div>
<div class="m w" style="left:124.6px;top:14.99px">l00k_at_h3r3.EntryPoint</div>
<div class="m w" style="left:4px;top:29.28px">0019FF58</div>
<div class="m w" style="left:66.5px;top:29.28px">0019FF80</div>
<div class="m w" style="left:4px;top:43.57px">0019FF5C</div>
<div class="m w" style="left:66.5px;top:43.57px">0019FF70</div>
<div class="m w" style="left:4px;top:57.86px">0019FF60</div>
<div class="m w" style="left:66.5px;top:57.86px">003F7000</div>
<div class="m r" style="left:4px;top:72.15px">0019FF64</div>
<div class="m w" style="left:66.5px;top:72.15px">00420207</div>
<div class="m w" style="left:124.6px;top:72.15px">l00k_at_h3r3.EntryPoint</div>
<div class="m r" style="left:4px;top:86.44px">0019FF68</div>
<div class="m w" style="left:66.5px;top:86.44px">00420207</div>
<div class="m w" style="left:124.6px;top:86.44px">l00k_at_h3r3.EntryPoint</div>
<div class="m w" style="left:4px;top:100.73px">0019FF6C</div>
<div class="m w" style="left:66.5px;top:100.73px">0019FFCC</div>
</div>
<div class="vs" style="left:850.5px;top:370px;width:13px;height:112px"></div>
<div class="th" style="left:850.5px;top:452px;width:13px;height:15px"></div>
<svg style="left:850.5px;top:370px" width="13" height="112" viewBox="0 0 13 112"><path d="M3.6 8.4 L6.5 5.0 L9.4 8.4" stroke="#505050" stroke-width="1.6" fill="none"/><path d="M3.6 103.6 L6.5 107.0 L9.4 103.6" stroke="#505050" stroke-width="1.6" fill="none"/></svg>
<div class="vs" style="left:573px;top:482px;width:277.5px;height:12.8px"></div>
<div class="th" style="left:587px;top:482px;width:71px;height:12.8px"></div>
<svg style="left:573px;top:482px" width="277.5" height="12.8" viewBox="0 0 277.5 12.8"><path d="M8.2 3.5000000000000004 L4.8 6.4 L8.2 9.3" stroke="#505050" stroke-width="1.6" fill="none"/><path d="M269.3 3.5000000000000004 L272.7 6.4 L269.3 9.3" stroke="#505050" stroke-width="1.6" fill="none"/></svg>
<div style="left:850.5px;top:482px;width:13px;height:12.8px;background:#f0f0f0"></div>
<div class="blk" style="left:2px;top:307.5px;width:568.5px;height:60.5px"></div>
<div class="m w" style="left:5.6px;top:308px">l00k_at_h3r3.0042020E</div>
<div class="m w" style="left:5.6px;top:350.81px">.nsp1:00420209 l00k_at_h3r3.exe:$20209 #609</div>
<div style="left:0;top:368px;width:570.5px;height:22.5px;background:#f0f0f0"></div>
<div style="left:1.5px;top:369.2px;width:67.3px;height:21.1px;background:#fff"></div>
<div style="left:68.2px;top:371.3px;width:1px;height:17.3px;background:#dcdcdc"></div>
<div style="left:69.2px;top:371.3px;width:1px;height:17.3px;background:#f8f8f8"></div>
<div style="left:135.0px;top:371.3px;width:1px;height:17.3px;background:#dcdcdc"></div>
<div style="left:136.0px;top:371.3px;width:1px;height:17.3px;background:#f8f8f8"></div>
<div style="left:201.8px;top:371.3px;width:1px;height:17.3px;background:#dcdcdc"></div>
<div style="left:202.8px;top:371.3px;width:1px;height:17.3px;background:#f8f8f8"></div>
<div style="left:268.7px;top:371.3px;width:1px;height:17.3px;background:#dcdcdc"></div>
<div style="left:269.7px;top:371.3px;width:1px;height:17.3px;background:#f8f8f8"></div>
<div style="left:335.8px;top:371.3px;width:1px;height:17.3px;background:#dcdcdc"></div>
<div style="left:336.8px;top:371.3px;width:1px;height:17.3px;background:#f8f8f8"></div>
<div style="left:403.5px;top:371.3px;width:1px;height:17.3px;background:#dcdcdc"></div>
<div style="left:404.5px;top:371.3px;width:1px;height:17.3px;background:#f8f8f8"></div>
<div style="left:480.5px;top:371.3px;width:1px;height:17.3px;background:#dcdcdc"></div>
<div style="left:481.5px;top:371.3px;width:1px;height:17.3px;background:#f8f8f8"></div>
<div style="left:546.0px;top:371.3px;width:1px;height:17.3px;background:#dcdcdc"></div>
<div style="left:547.0px;top:371.3px;width:1px;height:17.3px;background:#f8f8f8"></div>
<svg style="left:10.7px;top:374.3px" width="14" height="11" viewBox="0 0 14 11"><rect x="4" y="0.6" width="9.7" height="7.6" rx="0.6" fill="#c8ccd4" stroke="#7c8494" stroke-width="0.5"/><path d="M6.4 1 V8 M8.8 1 V8 M11.2 1 V8" stroke="#9aa2b2" stroke-width="0.6"/><path d="M0.4 3 Q0.4 1.8 1.6 1.8 H4 V8.6 H0.4 Z" fill="#f0b818" stroke="#a07808" stroke-width="0.4"/><rect x="1" y="2.6" width="2.4" height="2.6" fill="#6aa0e0"/><rect x="0.3" y="8" width="13.4" height="1" fill="#505050"/><circle cx="2.6" cy="9.2" r="1.4" fill="#2a2a2a"/><circle cx="10.6" cy="9.2" r="1.4" fill="#2a2a2a"/></svg>
<div class="t" style="left:26.9px;top:369.5px;height:21.3px;line-height:22.3px;font-size:10.6px;letter-spacing:-0.188px;">内存</div>
<div class="t" style="left:53.1px;top:369.5px;height:21.3px;line-height:22.3px;font-size:10px;font-family:'Liberation Serif','Noto Sans CJK SC',serif;letter-spacing:0.000px;">1</div>
<svg style="left:78.0px;top:374.3px" width="14" height="11" viewBox="0 0 14 11"><rect x="4" y="0.6" width="9.7" height="7.6" rx="0.6" fill="#c8ccd4" stroke="#7c8494" stroke-width="0.5"/><path d="M6.4 1 V8 M8.8 1 V8 M11.2 1 V8" stroke="#9aa2b2" stroke-width="0.6"/><path d="M0.4 3 Q0.4 1.8 1.6 1.8 H4 V8.6 H0.4 Z" fill="#f0b818" stroke="#a07808" stroke-width="0.4"/><rect x="1" y="2.6" width="2.4" height="2.6" fill="#6aa0e0"/><rect x="0.3" y="8" width="13.4" height="1" fill="#505050"/><circle cx="2.6" cy="9.2" r="1.4" fill="#2a2a2a"/><circle cx="10.6" cy="9.2" r="1.4" fill="#2a2a2a"/></svg>
<div class="t" style="left:94.2px;top:369.5px;height:21.3px;line-height:22.3px;font-size:10.6px;letter-spacing:-0.188px;">内存</div>
<div class="t" style="left:120.4px;top:369.5px;height:21.3px;line-height:22.3px;font-size:10px;font-family:'Liberation Serif','Noto Sans CJK SC',serif;letter-spacing:0.000px;">2</div>
<svg style="left:145.29999999999998px;top:374.3px" width="14" height="11" viewBox="0 0 14 11"><rect x="4" y="0.6" width="9.7" height="7.6" rx="0.6" fill="#c8ccd4" stroke="#7c8494" stroke-width="0.5"/><path d="M6.4 1 V8 M8.8 1 V8 M11.2 1 V8" stroke="#9aa2b2" stroke-width="0.6"/><path d="M0.4 3 Q0.4 1.8 1.6 1.8 H4 V8.6 H0.4 Z" fill="#f0b818" stroke="#a07808" stroke-width="0.4"/><rect x="1" y="2.6" width="2.4" height="2.6" fill="#6aa0e0"/><rect x="0.3" y="8" width="13.4" height="1" fill="#505050"/><circle cx="2.6" cy="9.2" r="1.4" fill="#2a2a2a"/><circle cx="10.6" cy="9.2" r="1.4" fill="#2a2a2a"/></svg>
<div class="t" style="left:161.5px;top:369.5px;height:21.3px;line-height:22.3px;font-size:10.6px;letter-spacing:-0.188px;">内存</div>
<div class="t" style="left:187.7px;top:369.5px;height:21.3px;line-height:22.3px;font-size:10px;font-family:'Liberation Serif','Noto Sans CJK SC',serif;letter-spacing:0.000px;">3</div>
<svg style="left:212.59999999999997px;top:374.3px" width="14" height="11" viewBox="0 0 14 11"><rect x="4" y="0.6" width="9.7" height="7.6" rx="0.6" fill="#c8ccd4" stroke="#7c8494" stroke-width="0.5"/><path d="M6.4 1 V8 M8.8 1 V8 M11.2 1 V8" stroke="#9aa2b2" stroke-width="0.6"/><path d="M0.4 3 Q0.4 1.8 1.6 1.8 H4 V8.6 H0.4 Z" fill="#f0b818" stroke="#a07808" stroke-width="0.4"/><rect x="1" y="2.6" width="2.4" height="2.6" fill="#6aa0e0"/><rect x="0.3" y="8" width="13.4" height="1" fill="#505050"/><circle cx="2.6" cy="9.2" r="1.4" fill="#2a2a2a"/><circle cx="10.6" cy="9.2" r="1.4" fill="#2a2a2a"/></svg>
<div class="t" style="left:228.79999999999998px;top:369.5px;height:21.3px;line-height:22.3px;font-size:10.6px;letter-spacing:-0.188px;">内存</div>
<div class="t" style="left:254.99999999999997px;top:369.5px;height:21.3px;line-height:22.3px;font-size:10px;font-family:'Liberation Serif','Noto Sans CJK SC',serif;letter-spacing:0.000px;">4</div>
<svg style="left:279.9px;top:374.3px" width="14" height="11" viewBox="0 0 14 11"><rect x="4" y="0.6" width="9.7" height="7.6" rx="0.6" fill="#c8ccd4" stroke="#7c8494" stroke-width="0.5"/><path d="M6.4 1 V8 M8.8 1 V8 M11.2 1 V8" stroke="#9aa2b2" stroke-width="0.6"/><path d="M0.4 3 Q0.4 1.8 1.6 1.8 H4 V8.6 H0.4 Z" fill="#f0b818" stroke="#a07808" stroke-width="0.4"/><rect x="1" y="2.6" width="2.4" height="2.6" fill="#6aa0e0"/><rect x="0.3" y="8" width="13.4" height="1" fill="#505050"/><circle cx="2.6" cy="9.2" r="1.4" fill="#2a2a2a"/><circle cx="10.6" cy="9.2" r="1.4" fill="#2a2a2a"/></svg>
<div class="t" style="left:296.09999999999997px;top:369.5px;height:21.3px;line-height:22.3px;font-size:10.6px;letter-spacing:-0.187px;">内存</div>
<div class="t" style="left:322.3px;top:369.5px;height:21.3px;line-height:22.3px;font-size:10px;font-family:'Liberation Serif','Noto Sans CJK SC',serif;letter-spacing:0.000px;">5</div>
<svg style="left:347px;top:373.7px" width="14" height="13.5" viewBox="0 0 14 13.5"><path d="M1.6 1.4 L4.4 2.6 Q7 1.8 9.6 2.6 L12.4 1.4 L12.8 5.6 Q13.4 12.6 7 12.8 Q0.6 12.6 1.2 5.6 Z" fill="#e4a058" stroke="#a8682c" stroke-width="0.5"/><path d="M3.6 8.4 Q7 6 10.4 8.4 Q10 12.2 7 12.3 Q4 12.2 3.6 8.4 Z" fill="#fbeedc"/><circle cx="4.8" cy="6.4" r="0.85" fill="#222"/><circle cx="9.2" cy="6.4" r="0.85" fill="#222"/><ellipse cx="7" cy="9" rx="1.1" ry="0.8" fill="#3a2a1a"/><path d="M7 9.6 V10.8" stroke="#3a2a1a" stroke-width="0.5"/></svg>
<div class="t" style="left:363.2px;top:369.5px;height:21.3px;line-height:22.3px;font-size:10.6px;letter-spacing:-0.187px;">监视</div>
<div class="t" style="left:389.4px;top:369.5px;height:21.3px;line-height:22.3px;font-size:10px;font-family:'Liberation Serif','Noto Sans CJK SC',serif;letter-spacing:0.000px;">1</div>
<div class="t" style="left:413.8px;top:370.1px;height:21.3px;line-height:22.3px;font-size:8.5px;font-family:'Liberation Sans','Noto Sans CJK SC',sans-serif;color:#444;-webkit-text-stroke-width:0;letter-spacing:0px;transform:scaleX(1.0105);transform-origin:0 0;">[<span style="color:#c03030;font-style:italic">x</span>=]</div>
<div class="t" style="left:430.9px;top:369.5px;height:21.3px;line-height:22.3px;font-size:10.6px;letter-spacing:-0.558px;">局部变量</div>
<svg style="left:490.8px;top:373.90000000000003px" width="14" height="13" viewBox="0 0 14 13"><circle cx="2.4" cy="2.4" r="1.8" fill="#fff" stroke="#3a78d8" stroke-width="1"/><path d="M4.4 2.6 H7.4 V10 H9.4 M7.4 5.6 H9.4" stroke="#9a9a9a" stroke-width="0.8" fill="none"/><rect x="9.6" y="3.8" width="3.4" height="3.2" rx="0.8" fill="#f4f4f4" stroke="#9a9a9a" stroke-width="0.7"/><rect x="9.6" y="8.4" width="3.4" height="3.2" rx="0.8" fill="#f4f4f4" stroke="#9a9a9a" stroke-width="0.7"/></svg>
<div class="t" style="left:507.4px;top:369.5px;height:21.3px;line-height:22.3px;font-size:10.6px;letter-spacing:-0.291px;">结构体</div>
<div style="left:1.2px;top:391.1px;width:553.8px;height:14.8px;background:#c0c0c0"></div>
<div style="left:1.2px;top:405.9px;width:553.8px;height:1.5px;background:#f4f4ec"></div>
<div style="left:1.2px;top:390.2px;width:569.5px;height:0.9px;background:#484848"></div>
<div style="left:61px;top:391.1px;width:1.5px;height:14.8px;background:#f0f0e8"></div>
<div style="left:385px;top:391.1px;width:1.5px;height:14.8px;background:#f0f0e8"></div>
<div style="left:498.5px;top:391.1px;width:1.5px;height:14.8px;background:#f0f0e8"></div>
<div class="t" style="left:4.9px;top:391.3px;font-size:13px;line-height:16px;color:#1a1a1a;-webkit-text-stroke-width:0;letter-spacing:0.184px;">地址</div>
<div class="t" style="left:65.10000000000001px;top:391.3px;font-size:13px;line-height:16px;color:#1a1a1a;-webkit-text-stroke-width:0;letter-spacing:0.628px;">十六进制</div>
<div class="m" style="left:389px;top:391.8px;color:#000">ASCII</div>
<div class="blk" style="left:1.2px;top:407.3px;width:553.8px;height:89.1px"></div>
<div style="left:555px;top:391px;width:2px;height:106.5px;background:#fcfcfc"></div>
<div style="left:1.2px;top:496.4px;width:569px;height:1.1px;background:#fcfcfc"></div>
<div style="left:61px;top:407.3px;width:1.3px;height:89.1px;background:#b0b0b0"></div>
<div style="left:143.3px;top:407.3px;width:1.3px;height:89.1px;background:#b0b0b0"></div>
<div style="left:224px;top:407.3px;width:1.3px;height:89.1px;background:#b0b0b0"></div>
<div style="left:304.6px;top:407.3px;width:1.3px;height:89.1px;background:#b0b0b0"></div>
<div style="left:385px;top:407.3px;width:1.3px;height:89.1px;background:#b0b0b0"></div>
<div style="left:498.5px;top:407.3px;width:1.3px;height:89.1px;background:#b0b0b0"></div>
<div style="left:62.3px;top:407.5px;width:19.7px;height:14.29px;background:#800080"></div>
<div style="left:388px;top:407.5px;width:6.8px;height:14.29px;background:#800080"></div>
<div style="left:2px;top:406.5px;width:553px;height:89.9px;overflow:hidden">
<div class="m r" style="left:4.5px;top:1.00px">0019FF50</div>
<div class="m" style="left:64.6px;top:1.00px"><span class="w">07</span> <span class="w">02</span> <span class="dg">42</span> <span class="gr">00</span></div>
<div style="left:64.1px;top:13.39px;width:74.5px;height:1.4px;background:#c0c0c0"></div>
<div class="m" style="left:145.4px;top:1.00px"><span class="w">07</span> <span class="w">02</span> <span class="dg">42</span> <span class="gr">00</span></div>
<div style="left:144.9px;top:13.39px;width:74.5px;height:1.4px;background:#c0c0c0"></div>
<div class="m" style="left:226px;top:1.00px"><span class="w">80</span> <span class="gd">FF</span> <span class="w">19</span> <span class="gr">00</span></div>
<div style="left:225.5px;top:13.39px;width:74.5px;height:1.4px;background:#c0c0c0"></div>
<div class="m" style="left:306.6px;top:1.00px"><span class="dg">70</span> <span class="gd">FF</span> <span class="w">19</span> <span class="gr">00</span></div>
<div style="left:306.1px;top:13.39px;width:74.5px;height:1.4px;background:#c0c0c0"></div>
<div class="m" style="left:387px;top:1.00px"><span class="gr">.</span><span class="gr">.</span><span class="dg">B</span><span class="gr">.</span><span class="gr">.</span><span class="gr">.</span><span class="dg">B</span><span class="gr">.</span><span class="gr">.</span><span style="color:#c8c8c8;font-weight:normal">ÿ</span><span class="gr">.</span><span class="gr">.</span><span class="dg">p</span><span style="color:#c8c8c8;font-weight:normal">ÿ</span><span class="gr">.</span><span class="gr">.</span></div>
<div class="m w" style="left:4.5px;top:15.29px">0019FF60</div>
<div class="m" style="left:64.6px;top:15.29px"><span class="gr">00</span> <span class="dg">70</span> <span class="dg">3F</span> <span class="gr">00</span></div>
<div style="left:64.1px;top:27.68px;width:74.5px;height:1.4px;background:#c0c0c0"></div>
<div class="m" style="left:145.4px;top:15.29px"><span class="w">07</span> <span class="w">02</span> <span class="dg">42</span> <span class="gr">00</span></div>
<div class="m" style="left:226px;top:15.29px"><span class="w">07</span> <span class="w">02</span> <span class="dg">42</span> <span class="gr">00</span></div>
<div style="left:225.5px;top:27.68px;width:74.5px;height:1.4px;background:#c0c0c0"></div>
<div class="m" style="left:306.6px;top:15.29px"><span class="w">CC</span> <span class="gd">FF</span> <span class="w">19</span> <span class="gr">00</span></div>
<div style="left:306.1px;top:27.68px;width:74.5px;height:1.4px;background:#c0c0c0"></div>
<div class="m" style="left:387px;top:15.29px"><span class="gr">.</span><span class="dg">p</span><span class="dg">?</span><span class="gr">.</span><span class="gr">.</span><span class="gr">.</span><span class="dg">B</span><span class="gr">.</span><span class="gr">.</span><span class="gr">.</span><span class="dg">B</span><span class="gr">.</span><span style="color:#c8c8c8;font-weight:normal">Ì</span><span style="color:#c8c8c8;font-weight:normal">ÿ</span><span class="gr">.</span><span class="gr">.</span></div>
<div class="m w" style="left:4.5px;top:29.58px">0019FF70</div>
<div class="m" style="left:64.6px;top:29.58px"><span class="dg">46</span> <span class="w">02</span> <span class="gr">00</span> <span class="gr">00</span></div>
<div class="m" style="left:145.4px;top:29.58px"><span class="dg">09</span> <span class="w">FE</span> <span class="w">CD</span> <span class="dg">76</span></div>
<div style="left:144.9px;top:41.97px;width:74.5px;height:1.4px;background:#c0c0c0"></div>
<div class="m" style="left:226px;top:29.58px"><span class="gr">00</span> <span class="dg">70</span> <span class="dg">3F</span> <span class="gr">00</span></div>
<div style="left:225.5px;top:41.97px;width:74.5px;height:1.4px;background:#c0c0c0"></div>
<div class="m" style="left:306.6px;top:29.58px"><span class="w">F0</span> <span class="w">FD</span> <span class="w">CD</span> <span class="dg">76</span></div>
<div style="left:306.1px;top:41.97px;width:74.5px;height:1.4px;background:#c0c0c0"></div>
<div class="m" style="left:387px;top:29.58px"><span class="dg">F</span><span class="gr">.</span><span class="gr">.</span><span class="gr">.</span><span class="gr">.</span><span style="color:#c8c8c8;font-weight:normal">þ</span><span style="color:#c8c8c8;font-weight:normal">Í</span><span class="dg">v</span><span class="gr">.</span><span class="dg">p</span><span class="dg">?</span><span class="gr">.</span><span style="color:#c8c8c8;font-weight:normal">ð</span><span style="color:#c8c8c8;font-weight:normal">ý</span><span style="color:#c8c8c8;font-weight:normal">Í</span><span class="dg">v</span></div>
<div class="m w" style="left:4.5px;top:43.87px">0019FF80</div>
<div class="m" style="left:64.6px;top:43.87px"><span class="w">DC</span> <span class="gd">FF</span> <span class="w">19</span> <span class="gr">00</span></div>
<div style="left:64.1px;top:56.26px;width:74.5px;height:1.4px;background:#c0c0c0"></div>
<div class="m" style="left:145.4px;top:43.87px"><span class="dg">7D</span> <span class="dg">60</span> <span class="w">8C</span> <span class="dg">77</span></div>
<div style="left:144.9px;top:56.26px;width:74.5px;height:1.4px;background:#c0c0c0"></div>
<div class="m" style="left:226px;top:43.87px"><span class="gr">00</span> <span class="dg">70</span> <span class="dg">3F</span> <span class="gr">00</span></div>
<div style="left:225.5px;top:56.26px;width:74.5px;height:1.4px;background:#c0c0c0"></div>
<div class="m" style="left:306.6px;top:43.87px"><span class="w">87</span> <span class="w">DA</span> <span class="w">C3</span> <span class="w">F1</span></div>
<div class="m" style="left:387px;top:43.87px"><span style="color:#c8c8c8;font-weight:normal">Ü</span><span style="color:#c8c8c8;font-weight:normal">ÿ</span><span class="gr">.</span><span class="gr">.</span><span class="dg">}</span><span class="dg">`</span><span class="gr">.</span><span class="dg">w</span><span class="gr">.</span><span class="dg">p</span><span class="dg">?</span><span class="gr">.</span><span class="gr">.</span><span style="color:#c8c8c8;font-weight:normal">Ú</span><span style="color:#c8c8c8;font-weight:normal">Ã</span><span style="color:#c8c8c8;font-weight:normal">ñ</span></div>
<div class="m w" style="left:4.5px;top:58.16px">0019FF90</div>
<div class="m" style="left:64.6px;top:58.16px"><span class="gr">00</span> <span class="gr">00</span> <span class="gr">00</span> <span class="gr">00</span></div>
<div class="m" style="left:145.4px;top:58.16px"><span class="gr">00</span> <span class="gr">00</span> <span class="gr">00</span> <span class="gr">00</span></div>
<div class="m" style="left:226px;top:58.16px"><span class="gr">00</span> <span class="dg">70</span> <span class="dg">3F</span> <span class="gr">00</span></div>
<div style="left:225.5px;top:70.55px;width:74.5px;height:1.4px;background:#c0c0c0"></div>
<div class="m" style="left:306.6px;top:58.16px"><span class="gr">00</span> <span class="gr">00</span> <span class="gr">00</span> <span class="gr">00</span></div>
<div class="m" style="left:387px;top:58.16px"><span class="gr">.</span><span class="gr">.</span><span class="gr">.</span><span class="gr">.</span><span class="gr">.</span><span class="gr">.</span><span class="gr">.</span><span class="gr">.</span><span class="gr">.</span><span class="dg">p</span><span class="dg">?</span><span class="gr">.</span><span class="gr">.</span><span class="gr">.</span><span class="gr">.</span><span class="gr">.</span></div>
<div class="m w" style="left:4.5px;top:72.45px">0019FFA0</div>
<div class="m" style="left:64.6px;top:72.45px"><span class="gr">00</span> <span class="gr">00</span> <span class="gr">00</span> <span class="gr">00</span></div>
<div class="m" style="left:145.4px;top:72.45px"><span class="gr">00</span> <span class="gr">00</span> <span class="gr">00</span> <span class="gr">00</span></div>
<div class="m" style="left:226px;top:72.45px"><span class="gr">00</span> <span class="gr">00</span> <span class="gr">00</span> <span class="gr">00</span></div>
<div class="m" style="left:306.6px;top:72.45px"><span class="gr">00</span> <span class="gr">00</span> <span class="gr">00</span> <span class="gr">00</span></div>
<div class="m" style="left:387px;top:72.45px"><span class="gr">.</span><span class="gr">.</span><span class="gr">.</span><span class="gr">.</span><span class="gr">.</span><span class="gr">.</span><span class="gr">.</span><span class="gr">.</span><span class="gr">.</span><span class="gr">.</span><span class="gr">.</span><span class="gr">.</span><span class="gr">.</span><span class="gr">.</span><span class="gr">.</span><span class="gr">.</span></div>
</div>
<div class="vs" style="left:557px;top:391px;width:12.7px;height:104.7px"></div>
<div class="th" style="left:557px;top:467px;width:12.7px;height:14.600000000000023px"></div>
<svg style="left:557px;top:391px" width="12.7" height="104.7" viewBox="0 0 12.7 104.7"><path d="M3.4499999999999997 9.7 L6.35 6.3 L9.25 9.7" stroke="#505050" stroke-width="1.6" fill="none"/><path d="M3.4499999999999997 95.7 L6.35 99.10000000000001 L9.25 95.7" stroke="#505050" stroke-width="1.6" fill="none"/></svg>
<div style="left:569.7px;top:391px;width:1px;height:105.6px;background:#585858"></div>
<div style="left:557px;top:495.7px;width:13.7px;height:0.9px;background:#585858"></div>
<div style="left:0;top:496.5px;width:865px;height:23px;background:#f0f0f0"></div>
<div class="t" style="left:2.1999999999999997px;top:499px;font-size:10.6px;line-height:18px;letter-spacing:-0.370px;">命令:</div>
<div style="left:32.8px;top:498.5px;width:771px;height:18.5px;background:#fff;border:1px solid #ababab"></div>
<div class="t" style="left:34.6px;top:498.5px;font-size:13.4px;line-height:18px;color:#909090;-webkit-text-stroke-width:0.1px;letter-spacing:0.046px;">命令使用逗号分隔（像汇编语言）</div>
<div class="t" style="left:238.5px;top:501.5px;font-size:11px;line-height:18px;color:#808080">:</div>
<div class="m" style="left:251.4px;top:500.5px;color:#7c7c7c;-webkit-text-stroke-width:0.2px">mov eax, ebx</div>
<div style="left:805px;top:499.5px;width:58px;height:17.5px;background:#e1e1e1;border:1px solid #adadad"></div>
<div class="t" style="left:806.6px;top:499.5px;font-size:10.6px;line-height:17px;letter-spacing:-0.388px;">默认</div>
<svg style="left:850.5px;top:506.5px" width="8" height="5" viewBox="0 0 8 5"><path d="M0.5 0.5 H7.5 L4 4.5 Z" fill="#222"/></svg>
<div style="left:0;top:519.5px;width:865px;height:18.5px;background:#c4c4c4"></div>
<div style="left:0;top:519px;width:865px;height:1px;background:#f4f4f4"></div>
<div style="left:2.8px;top:521px;width:49px;height:14.5px;background:#ffff00"></div>
<div class="t" style="left:11.4px;top:520.6px;font-size:10px;font-weight:bold;line-height:14px;color:#f00;-webkit-text-stroke-width:0;letter-spacing:0.200px;">已暂停</div>
<div style="left:56px;top:520.5px;width:678px;height:15.5px;border-left:1px solid #707070;border-top:1px solid #707070;border-right:1px solid #e8e8e8"></div>
<div class="t" style="left:58.6px;top:520.3px;font-size:10.6px;line-height:14.5px;letter-spacing:0.412px;">已于</div>
<div class="t" style="left:89.8px;top:521.3px;font-family:'Liberation Serif','Noto Sans CJK SC',serif;font-size:10.5px;line-height:14.5px;color:#00f;text-decoration:underline;letter-spacing:0.5px;transform:scaleX(0.8610);transform-origin:0 0;">0019FF50</div>
<div class="t" style="left:139.4px;top:520.3px;font-size:10.6px;line-height:14.5px;letter-spacing:-0.287px;">处设置硬件断点!</div>
<div style="left:741px;top:520.5px;width:122.5px;height:15.5px;border-left:1px solid #707070;border-top:1px solid #707070"></div>
<div class="t" style="left:744.1999999999999px;top:520.3px;font-size:10.6px;line-height:14.5px;letter-spacing:-0.224px;">已调试时间:</div>
<div class="t" style="left:810.2px;top:521.3px;font-size:10.3px;line-height:14.5px;font-family:'Liberation Sans','Noto Sans CJK SC',sans-serif;letter-spacing:0.170px;">0:08:40:24</div>
<div style="left:0;top:0;width:0.9px;height:538px;background:#505050"></div>
<div style="left:864px;top:0;width:1px;height:538px;background:#dcdcdc"></div>
<div style="left:0;top:536.3px;width:865px;height:1.7px;background:#d6d6de"></div>
</body></html>
